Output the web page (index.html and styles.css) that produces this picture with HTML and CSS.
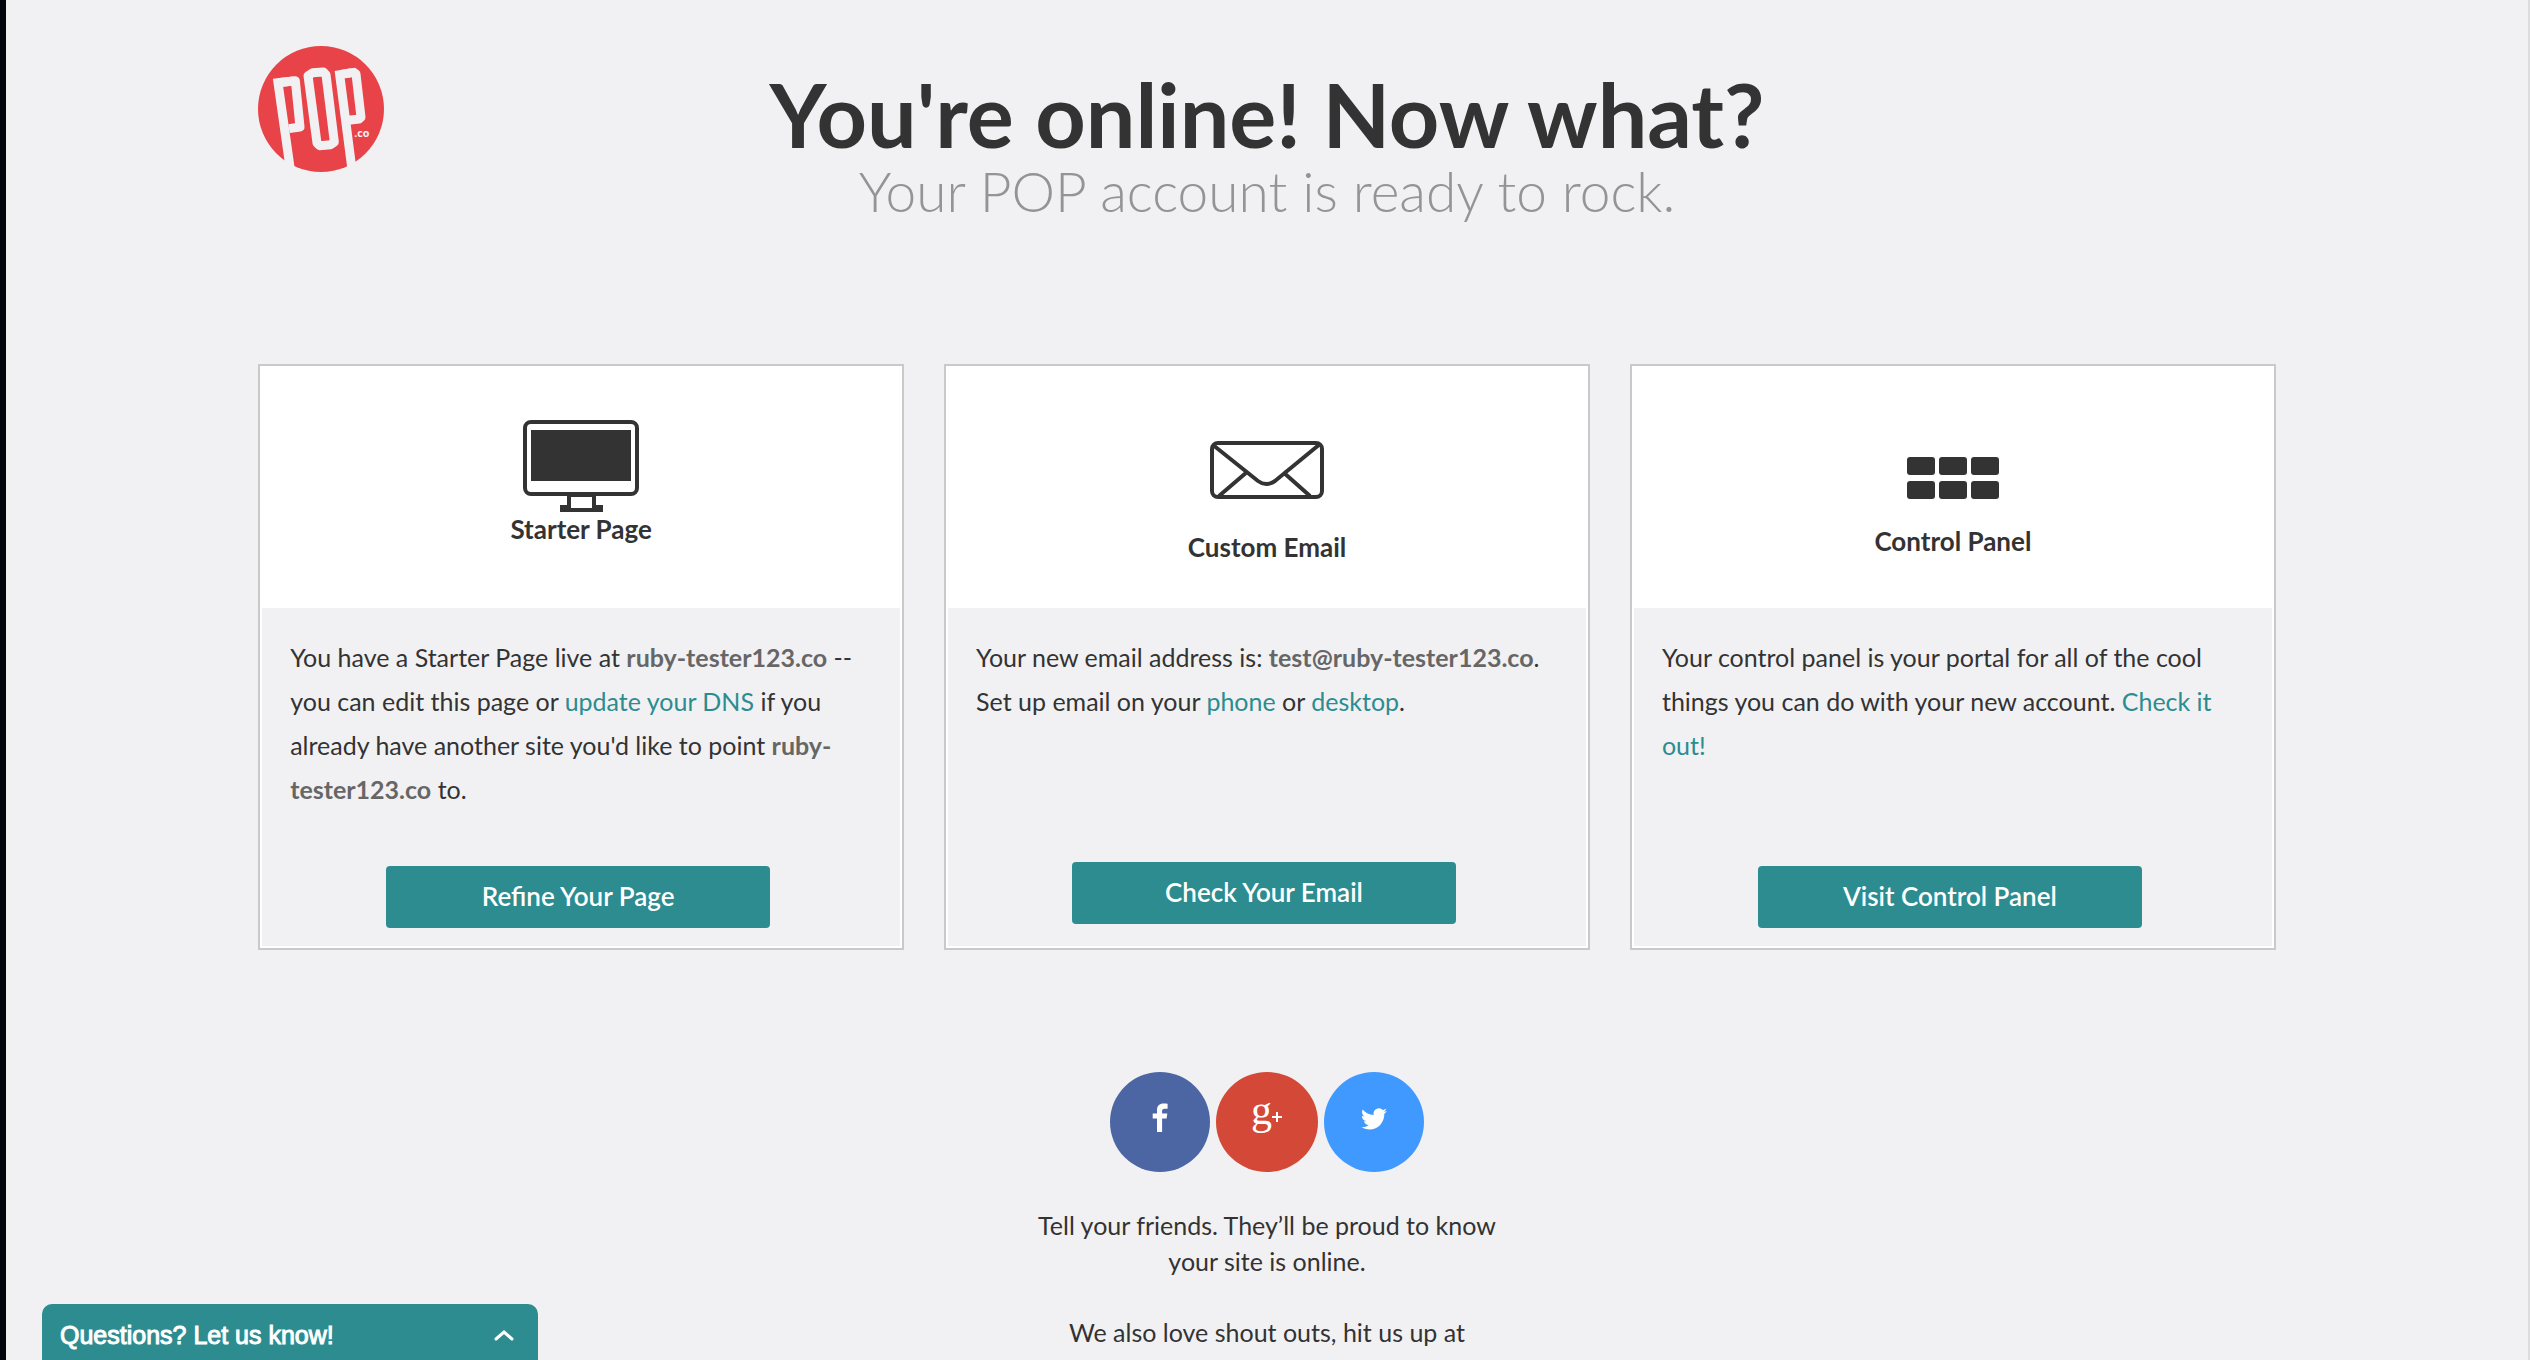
FILE: index.html
```html
<!DOCTYPE html>
<html lang="en">
<head>
<meta charset="utf-8">
<title>POP.co</title>
<link rel="stylesheet" href="styles.css">
</head>
<body>
<header class="masthead">
  <a class="logo" href="#" aria-label="POP.co">
    <svg viewBox="54 48 378 378" width="126" height="126">
      <circle cx="243" cy="237" r="189" fill="#e84348"/>
      <g fill="none" stroke="#f1f1f3" stroke-width="27" stroke-linejoin="round">
        <path stroke-linejoin="miter" d="M152 426L114 158L160 153"/>
        <path d="M114 158L166 152L180 291L147 296"/>
        <path d="M204 137L218 128L250 126L258 134L283 336L272 344L239 347L231 339Z"/>
        <path stroke-linejoin="miter" d="M337 426L299 134L335 128"/>
        <path d="M299 134L342 127L348 132L363 262L357 267L325 271"/>
      </g>
      <text x="343" y="321" font-size="32" class="logo-suffix">.co</text>
    </svg>
  </a>
  <div class="heading">
    <h1>You're online! Now what?</h1>
    <p>Your POP account is ready to rock.</p>
  </div>
</header>

<main>
  <div class="cards">
    <section class="card">
      <div class="card-head">
        <svg width="116" height="93" viewBox="0 0 116 93" fill="#333">
          <rect x="2" y="2" width="112" height="72" rx="6" fill="none" stroke="#333" stroke-width="4"/>
          <rect x="8" y="10" width="100" height="51"/>
          <path fill-rule="evenodd" d="M44 75h29v10h7v7H37v-7h7zM48 77v11h21V77z"/>
        </svg>
        <h2>Starter Page</h2>
      </div>
      <div class="card-body">
        <p>You have a Starter Page live at <strong>ruby-tester123.co</strong> -- you can edit this page or <a href="#">update your DNS</a> if you already have another site you'd like to point <strong>ruby-tester123.co</strong> to.</p>
        <button type="button" class="action">Refine Your Page</button>
      </div>
    </section>

    <section class="card">
      <div class="card-head">
        <svg width="114" height="111" viewBox="0 0 114 111" fill="none" stroke="#333" stroke-width="4">
          <rect x="2" y="23" width="110" height="54" rx="6"/>
          <path d="M3 25L48 61Q56 67 65 61L110 24M9 76L37 52M100 76L73 52"/>
        </svg>
        <h2>Custom Email</h2>
      </div>
      <div class="card-body card-body-raised">
        <p>Your new email address is: <strong>test@ruby-tester123.co</strong>. Set up email on your <a href="#">phone</a> or <a href="#">desktop</a>.</p>
        <button type="button" class="action">Check Your Email</button>
      </div>
    </section>

    <section class="card">
      <div class="card-head">
        <svg width="92" height="105" viewBox="0 0 92 105" fill="#333">
          <rect x="0" y="37" width="28" height="18" rx="3"/>
          <rect x="32" y="37" width="28" height="18" rx="3"/>
          <rect x="64" y="37" width="28" height="18" rx="3"/>
          <rect x="0" y="61" width="28" height="18" rx="3"/>
          <rect x="32" y="61" width="28" height="18" rx="3"/>
          <rect x="64" y="61" width="28" height="18" rx="3"/>
        </svg>
        <h2>Control Panel</h2>
      </div>
      <div class="card-body">
        <p>Your control panel is your portal for all of the cool things you can do with your new account. <a href="#">Check it out!</a></p>
        <button type="button" class="action">Visit Control Panel</button>
      </div>
    </section>
  </div>

  <section class="share">
    <nav class="social">
      <a class="facebook" href="#" aria-label="Facebook">
        <svg width="100" height="100" viewBox="0 0 100 100" fill="#fff"><path d="M47 60V46.4h-4.300v-5H47V38c0-4.200 2.500-6.400 6.500-6.400 1.900 0 3.600.1 4.100.2v5h-2.900c-2.200 0-2.600 1-2.600 2.500v2.100h5.200l-.7 5h-4.500V60z"/></svg>
      </a>
      <a class="google" href="#" aria-label="Google Plus">
        <svg width="102" height="100" viewBox="0 0 102 100"><text x="35" y="52" font-size="42" class="google-g">g</text><path d="M56 45h10M61 40v10" stroke="#fff" stroke-width="2"/></svg>
      </a>
      <a class="twitter" href="#" aria-label="Twitter">
        <svg width="100" height="100" viewBox="0 0 100 100" fill="#fff"><path transform="translate(37 34) scale(1.080)" d="M23.953 4.570a10 10 0 01-2.825.775 4.958 4.958 0 002.163-2.723c-.951.555-2.005.959-3.127 1.184a4.920 4.920 0 00-8.384 4.482C7.690 8.095 4.067 6.130 1.640 3.162a4.822 4.822 0 00-.666 2.475c0 1.710.87 3.213 2.188 4.096a4.904 4.904 0 01-2.228-.616v.06a4.923 4.923 0 003.946 4.827 4.996 4.996 0 01-2.212.085 4.936 4.936 0 004.604 3.417 9.867 9.867 0 01-6.102 2.105c-.39 0-.779-.023-1.170-.067a13.995 13.995 0 007.557 2.209c9.053 0 13.998-7.496 13.998-13.985 0-.21 0-.42-.015-.63A9.935 9.935 0 0024 4.590z"/></svg>
      </a>
    </nav>
    <p>Tell your friends. They’ll be proud to know your site is online.</p>
    <p>We also love shout outs, hit us up at</p>
  </section>
</main>

<button type="button" class="chat">
  <span>Questions? Let us know!</span>
  <svg width="20" height="12" viewBox="0 0 20 12" fill="none" stroke="#fff" stroke-width="3" stroke-linecap="round"><path d="M2 10l8-7 8 7"/></svg>
</button>
</body>
</html>
```
FILE: styles.css
```css
* {
  box-sizing: border-box;
}

html {
  background: #f1f1f3;
}

body {
  margin: 0;
  min-height: 100vh;
  border-left: 6px solid #02060c;
  border-right: 2px solid #dcdcde;
  font-family: Lato, "Open Sans", sans-serif;
  font-size: 25px;
  color: #333;
}

h1,
h2,
p {
  margin: 0;
}

a {
  color: #2c8c90;
  text-decoration: none;
}

button {
  border: 0;
  color: #fff;
  font: inherit;
  cursor: pointer;
}

.masthead {
  display: grid;
  grid-template-columns: 126px 1fr 126px;
  padding: 46px 10% 0;
}

.logo svg {
  display: block;
}

.logo-suffix {
  fill: #f1f1f3;
  font-family: "Open Sans", sans-serif;
  font-weight: 700;
}

.heading {
  padding-top: 18px;
  text-align: center;
}

h1 {
  font-size: 88px;
  font-weight: 700;
  line-height: 100px;
}

.heading p {
  color: #949496;
  font-size: 55px;
  font-weight: 300;
  line-height: 54px;
}

.cards {
  display: grid;
  grid-template-columns: repeat(3, 1fr);
  gap: 40px;
  margin-top: 146px;
  padding: 0 10%;
}

.card {
  display: flex;
  flex-direction: column;
  border: 2px solid #c9c9cc;
  background: #fff;
  padding: 0 2px 2px;
}

.card-head {
  display: flex;
  flex-direction: column;
  align-items: center;
  min-height: 242px;
  padding-top: 54px;
}

h2 {
  font-size: 26px;
  font-weight: 700;
  line-height: 32px;
}

.card-body {
  display: flex;
  flex: 1;
  flex-direction: column;
  min-height: 338px;
  padding: 27px 40px 18px 28px;
  background: #f1f1f3;
}

.card-body-raised {
  padding-bottom: 22px;
}

.card-body p {
  line-height: 44px;
}

.card-body strong {
  color: #666;
}

.action {
  height: 62px;
  margin: auto 90px 0 96px;
  padding: 0 0 3px;
  border-radius: 4px;
  background: #2c8c90;
  font-size: 26px;
  font-weight: 600;
}

.share {
  display: flex;
  flex-direction: column;
  align-items: center;
  gap: 35px;
  padding-top: 122px;
}

.social {
  display: flex;
  gap: 6px;
}

.social a {
  border-radius: 50%;
}

.social svg {
  display: block;
}

.facebook {
  background: #4c66a4;
}

.google {
  background: #d34836;
}

.google-g {
  fill: #fff;
  font-family: "Liberation Serif", serif;
}

.twitter {
  background: #4099ff;
}

.share p {
  max-width: 480px;
  line-height: 36px;
  text-align: center;
}

.chat {
  position: fixed;
  bottom: 0;
  left: 42px;
  display: flex;
  align-items: center;
  justify-content: space-between;
  width: 496px;
  height: 56px;
  padding: 6px 24px 0 18px;
  border-radius: 10px 10px 0 0;
  background: #2c8c90;
  font-family: "Liberation Sans", Arial, sans-serif;
  font-size: 25px;
  -webkit-text-stroke: 1px #fff;
}
```
